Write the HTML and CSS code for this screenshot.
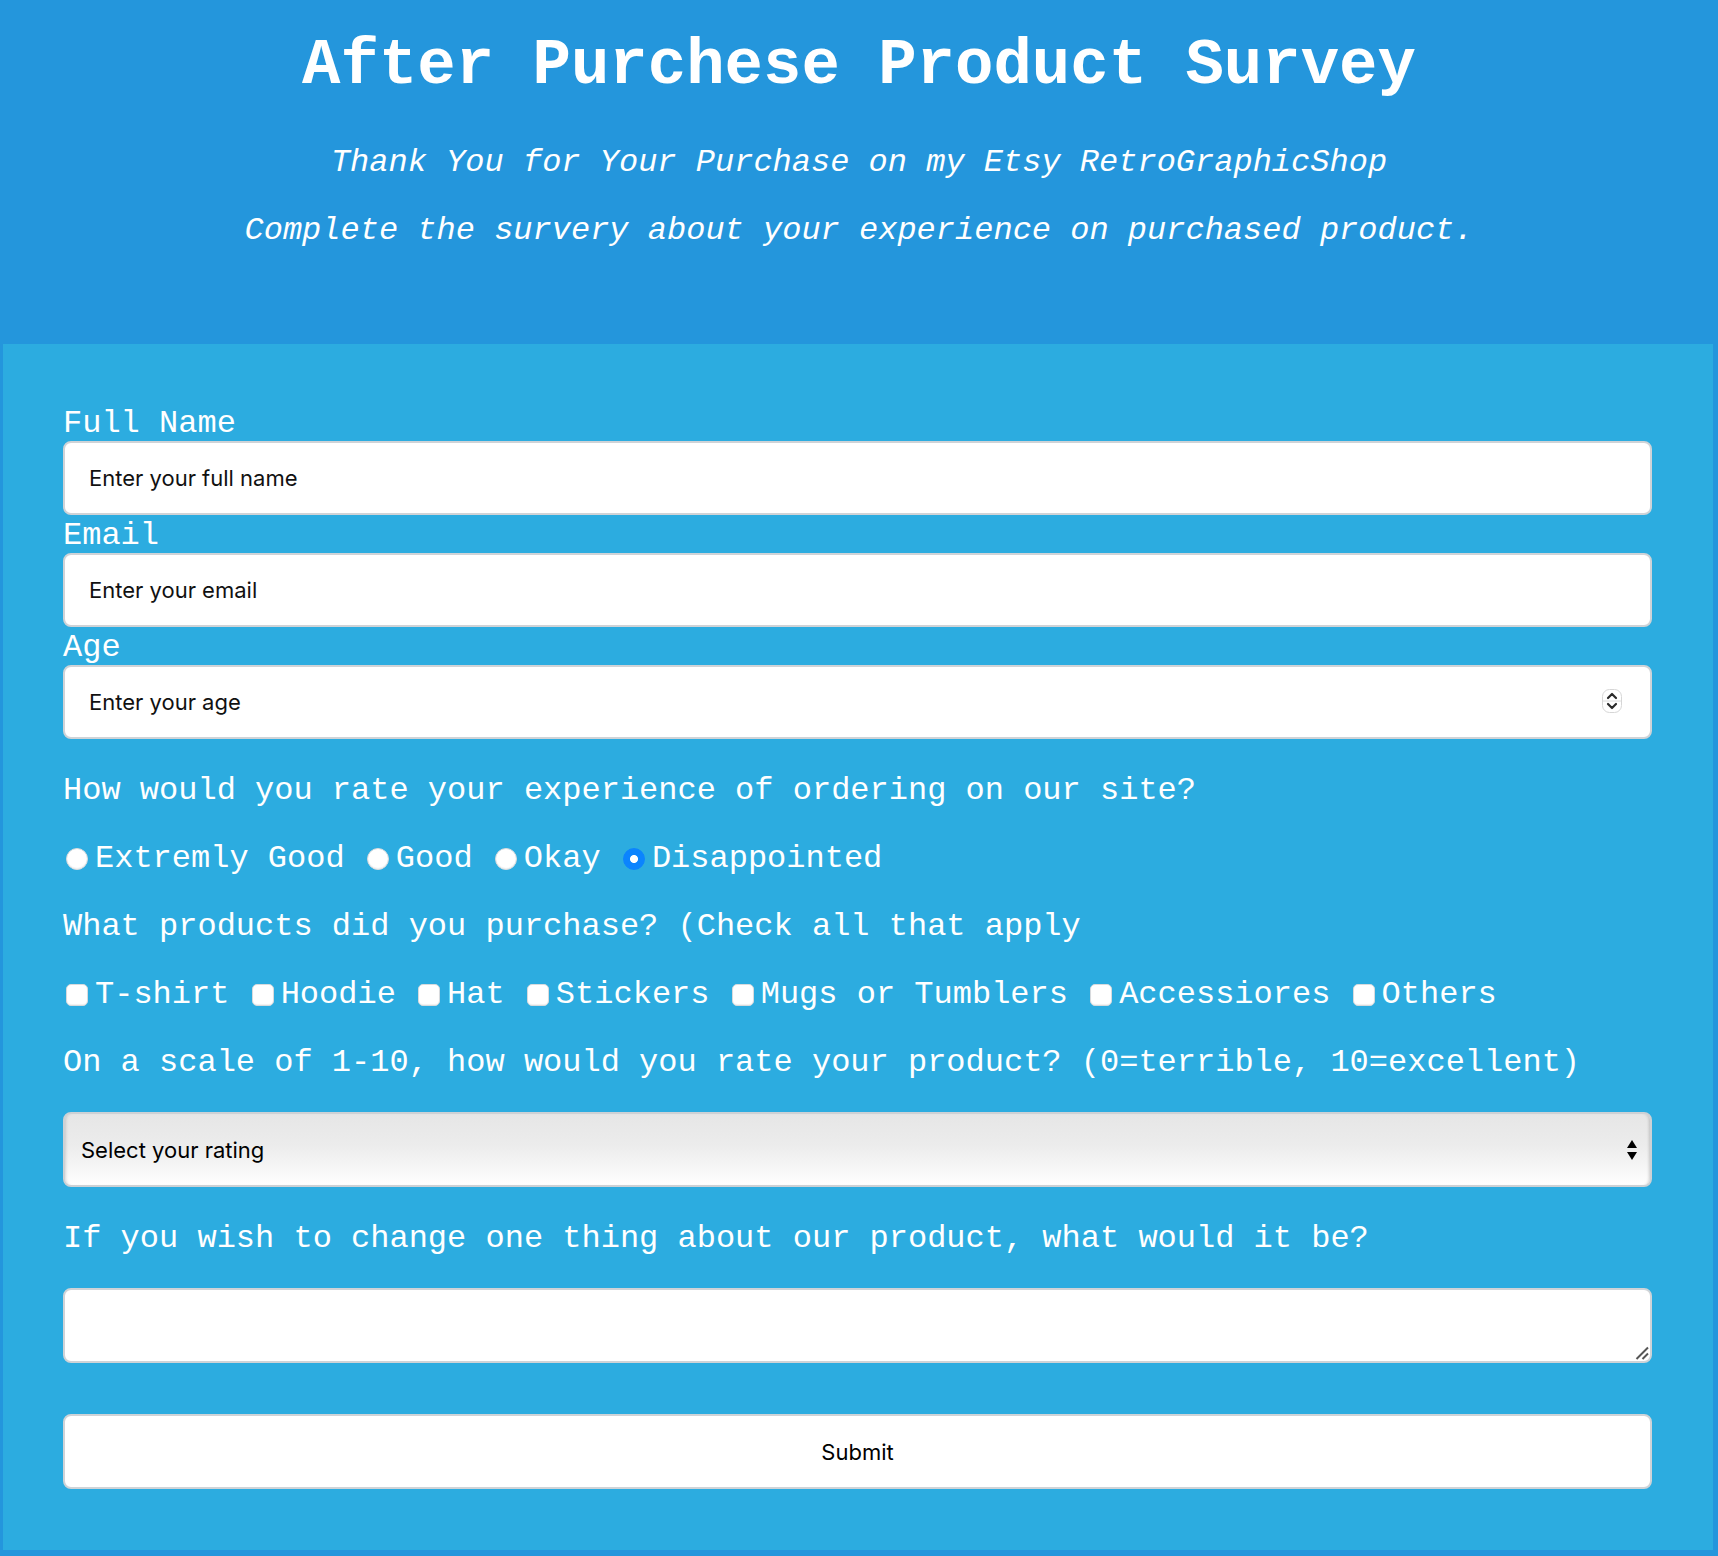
FILE: index.html
```html
<!DOCTYPE html>
<html lang="en">
<head>
<meta charset="utf-8">
<title>After Purchese Product Survey</title>
<link rel="stylesheet" href="styles.css">
</head>
<body>
<header class="hero">
  <h1 class="title">After Purchese Product Survey</h1>
  <p class="tagline tagline-first">Thank You for Your Purchase on my Etsy RetroGraphicShop</p>
  <p class="tagline">Complete the survery about your experience on purchased product.</p>
</header>
<form class="survey">
  <label class="field-label" for="name">Full Name</label>
  <input class="field" id="name" type="text" placeholder="Enter your full name">
  <label class="field-label" for="email">Email</label>
  <input class="field" id="email" type="email" placeholder="Enter your email">
  <label class="field-label" for="age">Age</label>
  <div class="number-wrap">
    <input class="field field-number" id="age" type="number" placeholder="Enter your age">
    <svg class="spinner" width="20" height="24" viewBox="0 0 20 24" aria-hidden="true">
      <rect x="0.5" y="0.5" width="19" height="23" rx="7" fill="#fff" stroke="#d6d6d6"/>
      <line x1="1" y1="12" x2="19" y2="12" stroke="#dcdcdc" stroke-width="1"/>
      <path d="M6 9 L10 5 L14 9" fill="none" stroke="#2a2a2a" stroke-width="2.2" stroke-linecap="round" stroke-linejoin="round"/>
      <path d="M6 15 L10 19 L14 15" fill="none" stroke="#2a2a2a" stroke-width="2.2" stroke-linecap="round" stroke-linejoin="round"/>
    </svg>
  </div>

  <p class="question">How would you rate your experience of ordering on our site?</p>
  <p class="choices">
    <label class="choice"><input class="radio" type="radio" name="exp">Extremly Good</label>
    <label class="choice"><input class="radio" type="radio" name="exp">Good</label>
    <label class="choice"><input class="radio" type="radio" name="exp">Okay</label>
    <label class="choice"><input class="radio" type="radio" name="exp" checked>Disappointed</label>
  </p>

  <p class="question">What products did you purchase? (Check all that apply</p>
  <p class="choices">
    <label class="choice"><input class="check" type="checkbox">T-shirt</label>
    <label class="choice"><input class="check" type="checkbox">Hoodie</label>
    <label class="choice"><input class="check" type="checkbox">Hat</label>
    <label class="choice"><input class="check" type="checkbox">Stickers</label>
    <label class="choice"><input class="check" type="checkbox">Mugs or Tumblers</label>
    <label class="choice"><input class="check" type="checkbox">Accessiores</label>
    <label class="choice"><input class="check" type="checkbox">Others</label>
  </p>

  <p class="question">On a scale of 1-10, how would you rate your product? (0=terrible, 10=excellent)</p>
  <div class="select-wrap">
    <select class="rating">
      <option>Select your rating</option>
      <option>1</option><option>2</option><option>3</option><option>4</option><option>5</option>
      <option>6</option><option>7</option><option>8</option><option>9</option><option>10</option>
    </select>
    <svg class="select-arrows" width="10" height="20" viewBox="0 0 10 20" aria-hidden="true">
      <path d="M5 0 L10 8 L0 8 Z" fill="#000"/>
      <path d="M0 12 L10 12 L5 20 Z" fill="#000"/>
    </svg>
  </div>

  <p class="question">If you wish to change one thing about our product, what would it be?</p>
  <div class="comment-wrap">
    <textarea class="comment"></textarea>
    <svg class="resizer" width="14" height="14" viewBox="0 0 14 14" aria-hidden="true">
      <line x1="13" y1="1.5" x2="1.5" y2="13" stroke="#555" stroke-width="2"/>
      <line x1="13" y1="7.5" x2="7.5" y2="13" stroke="#555" stroke-width="2"/>
    </svg>
  </div>

  <button class="submit" type="submit">Submit</button>
</form>
</body>
</html>
```
FILE: styles.css
```css
html {
  background: #2496dc;
}

body {
  margin: 0;
  background: #2496dc;
  color: #fff;
  font-family: "Liberation Mono", "Courier New", monospace;
  font-size: 32px;
  line-height: 36px;
}

.hero {
  padding: 30px 0 95px;
  text-align: center;
}

.title {
  margin: 0;
  font-size: 64px;
  line-height: 72px;
  font-weight: bold;
}

.tagline {
  margin: 32px 0 0;
  font-style: italic;
}

.tagline-first {
  margin-top: 43px;
}

.survey {
  margin: 0 5px 6px 3px;
  padding: 60px 61px 61px 60px;
  background: #2cace0;
}

.field-label {
  display: block;
  line-height: 33px;
  padding-top: 3px;
}

.field,
.rating,
.comment,
.submit {
  display: block;
  box-sizing: border-box;
  width: 100%;
  height: 74px;
  margin: 1px 0;
  border: 2px solid #cfd3d7;
  border-radius: 8px;
  background: #fff;
  color: #000;
  font-family: Inter, "Noto Sans", sans-serif;
  font-size: 22px;
}

.field {
  padding: 0 24px;
  outline: none;
}

.field::placeholder {
  color: #111;
  opacity: 1;
}

.number-wrap {
  position: relative;
}

.field-number {
  -moz-appearance: textfield;
}

.field-number::-webkit-inner-spin-button,
.field-number::-webkit-outer-spin-button {
  -webkit-appearance: none;
  margin: 0;
}

.spinner {
  position: absolute;
  right: 30px;
  top: 24px;
}

.question,
.choices {
  margin: 32px 0 0;
  line-height: 33px;
  padding-top: 3px;
}

.radio,
.check {
  -webkit-appearance: none;
  appearance: none;
  box-sizing: border-box;
  width: 22px;
  height: 22px;
  margin: 0 7px 0 3px;
  vertical-align: -3px;
  background: #fff;
  border: 1px solid #d7dadd;
  box-shadow: inset 0 -1px 1px rgba(0, 0, 0, 0.06);
}

.radio {
  border-radius: 50%;
}

.check {
  border-radius: 5px;
}

.radio:checked {
  background: radial-gradient(circle, #fff 0 3.6px, #0b84fe 4.4px);
  border-color: #0b84fe;
  box-shadow: none;
}

.select-wrap {
  position: relative;
  margin-top: 33px;
}

.rating {
  -webkit-appearance: none;
  appearance: none;
  height: 75px;
  margin: 0;
  padding: 0 16px;
  background: linear-gradient(#e6e6e6 0%, #ececec 45%, #f6f6f6 75%, #fff 100%);
  border-color: #cdd1d5;
  box-shadow: inset 3px 0 3px -2px rgba(0, 0, 0, 0.14), inset -3px 0 3px -2px rgba(0, 0, 0, 0.18);
  outline: none;
}

.select-arrows {
  position: absolute;
  right: 15px;
  top: 28px;
  pointer-events: none;
}

.comment-wrap {
  position: relative;
  margin-top: 33px;
}

.comment {
  height: 75px;
  margin: 0;
  padding: 10px 24px;
  resize: none;
  outline: none;
}

.resizer {
  position: absolute;
  right: 3px;
  bottom: 3px;
  pointer-events: none;
}

.submit {
  height: 75px;
  margin: 51px 0 0;
  text-align: center;
  cursor: pointer;
}
```
